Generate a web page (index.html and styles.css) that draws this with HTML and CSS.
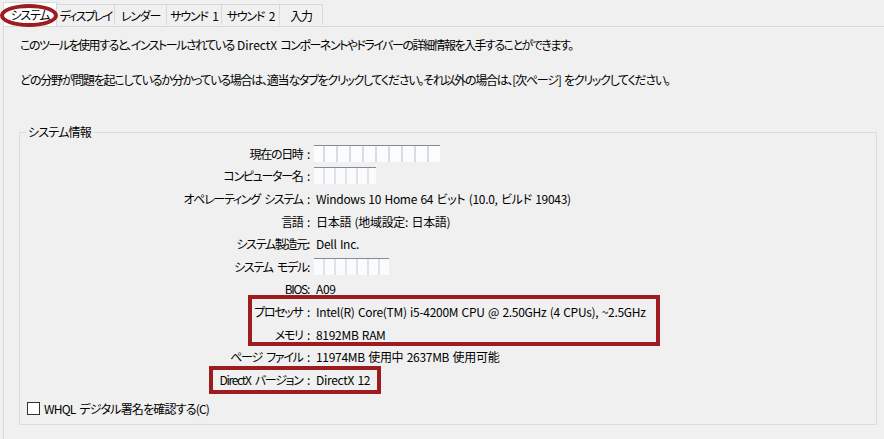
FILE: index.html
```html
<!DOCTYPE html>
<html lang="ja">
<head>
<meta charset="utf-8">
<link rel="stylesheet" href="styles.css">
</head>
<body>
<div class="window">
  <div class="tabs">
    <div class="tab active">システム</div>
    <div class="tab t2">ディスプレイ</div>
    <div class="tab t3">レンダー</div>
    <div class="tab t4">サウンド 1</div>
    <div class="tab t5">サウンド 2</div>
    <div class="tab t6">入力</div>
  </div>
  <div class="panel">
    <p class="intro">このツールを使用すると、インストールされている <span class="lat">DirectX</span> コンポーネントやドライバーの詳細情報を入手することができます。</p>
    <p class="intro loose">どの分野が問題を起こしているか分かっている場合は、適当なタブをクリックしてください。それ以外の場合は、[次ページ] をクリックしてください。</p>
    <fieldset class="group">
      <legend>システム情報</legend>
      <div class="rows">
        <div class="label">現在の日時 :</div><div class="value"><span class="blur b1"></span></div>
        <div class="label">コンピューター名 :</div><div class="value"><span class="blur b2"></span></div>
        <div class="label">オペレーティング システム :</div><div class="value">Windows 10 Home 64 ビット (10.0, ビルド 19043)</div>
        <div class="label">言語 :</div><div class="value">日本語 (地域設定: 日本語)</div>
        <div class="label">システム製造元:</div><div class="value">Dell Inc.</div>
        <div class="label">システム モデル:</div><div class="value"><span class="blur b3"></span></div>
        <div class="label">BIOS:</div><div class="value">A09</div>
        <div class="label">プロセッサ :</div><div class="value">Intel(R) Core(TM) i5-4200M CPU @ 2.50GHz (4 CPUs), ~2.5GHz</div>
        <div class="label">メモリ :</div><div class="value">8192MB RAM</div>
        <div class="label">ページ ファイル :</div><div class="value">11974MB 使用中 2637MB 使用可能</div>
        <div class="label">DirectX バージョン :</div><div class="value">DirectX 12</div>
      </div>
      <label class="check"><span class="box"></span>WHQL デジタル署名を確認する(C)</label>
    </fieldset>
  </div>
  <div class="mark ellipse"></div>
  <div class="mark rect1"></div>
  <div class="mark rect2"></div>
</div>
</body>
</html>
```
FILE: styles.css
```css
html, body {
  margin: 0;
  padding: 0;
  background: #f0f0f0;
}
body {
  font-family: "Noto Sans CJK JP", "Noto Sans", sans-serif;
  font-size: 12px;
  color: #000;
  font-feature-settings: "palt" 1;
}
.window {
  position: relative;
  width: 884px;
  height: 439px;
  overflow: hidden;
}
.tabs {
  display: flex;
  padding: 4px 0 0 3px;
  height: 22px;
  letter-spacing: -1.2px;
  word-spacing: 3px;
}
.tab {
  height: 21px;
  line-height: 21px;
  box-sizing: border-box;
  text-align: center;
  border: 1px solid #d9d9d9;
  border-bottom: none;
  border-left: none;
  background: #f0f0f0;
  white-space: nowrap;
}
.tab.active {
  background: #fff;
  border-left: 1px solid #d9d9d9;
  width: 54px;
  margin-top: -2px;
  height: 24px;
  line-height: 24px;
}
.t2 { width: 58px; letter-spacing: -1.8px; }
.t3 { width: 52px; }
.t4 { width: 55px; }
.t5 { width: 58px; }
.t6 { width: 43px; }
.panel {
  border-top: 1px solid #d9d9d9;
  border-left: 1px solid #d9d9d9;
  margin-left: 3px;
  padding: 9px 7px 0 16px;
  height: 420px;
}
.intro {
  margin: 0 0 17px 0;
  line-height: 18px;
  letter-spacing: -1.5px;
  word-spacing: 2px;
  white-space: nowrap;
}
.intro.loose {
  letter-spacing: -1.25px;
}
.lat {
  letter-spacing: 0;
}
.group {
  margin: 36px 0 0 -1px;
  border: 1px solid #dcdcdc;
  padding: 3px 0 0 0;
  height: 300px;
  box-sizing: border-box;
  width: 858px;
}
.group legend {
  padding: 0 2px;
  margin-left: 6px;
  line-height: 14px;
  letter-spacing: -0.8px;
}
.rows {
  display: grid;
  grid-template-columns: 289px 1fr;
  grid-auto-rows: 22.6px;
  align-items: center;
  column-gap: 7px;
}
.label {
  text-align: right;
  white-space: nowrap;
  letter-spacing: -1.3px;
  word-spacing: 3px;
}
.value {
  white-space: nowrap;
  display: flex;
  align-items: center;
  letter-spacing: -0.3px;
  word-spacing: 1px;
}
.blur {
  display: inline-block;
  height: 16px;
  border-top: 1px solid #8a8a8a;
  background: repeating-linear-gradient(90deg, #fafbfc 0 9px, #dfe3e7 9px 11px);
  margin-left: -2px;
}
.b1 { width: 126px; background: repeating-linear-gradient(90deg, #fbfcfd 0 9px, #d8dde2 9px 11px, #fbfcfd 11px 13px); }
.b2 { width: 62px; }
.b3 { width: 75px; }
.check {
  display: flex;
  align-items: center;
  margin: 9px 0 0 7px;
  gap: 4px;
  letter-spacing: -0.8px;
  word-spacing: 2px;
}
.box {
  width: 11px;
  height: 11px;
  border: 1px solid #333;
  background: #fff;
}
.mark {
  position: absolute;
  border: 4px solid #9c1c20;
  box-sizing: border-box;
}
.ellipse {
  left: 0;
  top: 4px;
  width: 58px;
  height: 23px;
  border-radius: 50%;
}
.rect1 {
  left: 248px;
  top: 295px;
  width: 412px;
  height: 51px;
}
.rect2 {
  left: 209px;
  top: 366px;
  width: 172px;
  height: 28px;
}
```
